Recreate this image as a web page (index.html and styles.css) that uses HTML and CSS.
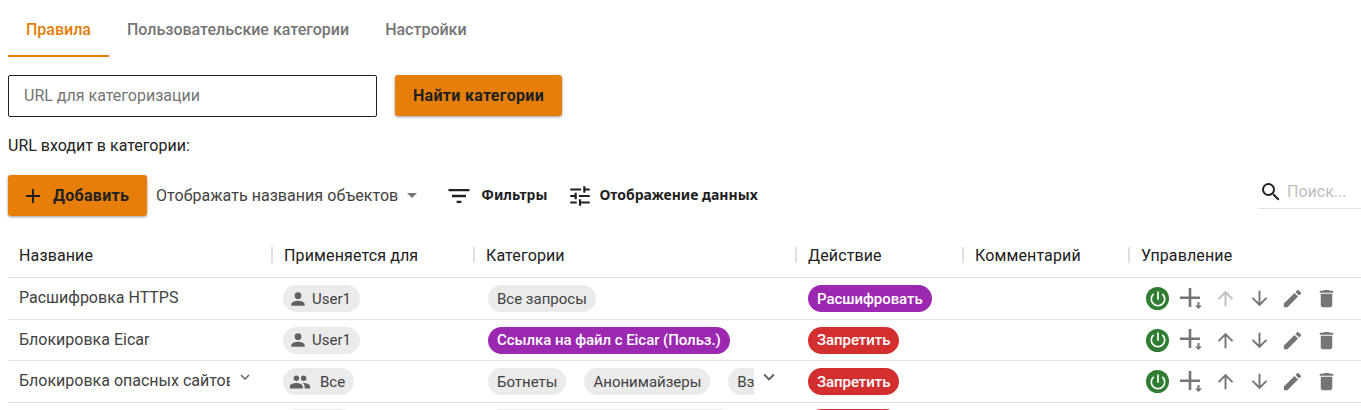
FILE: index.html
```html
<!DOCTYPE html>
<html lang="ru">
<head>
<meta charset="utf-8">
<title>Правила</title>
<link rel="stylesheet" href="styles.css">
</head>
<body>
<svg class="defs" width="0" height="0" aria-hidden="true">
  <symbol id="i-power" viewBox="0 0 24 24"><path d="M13 3h-2v10h2V3zm4.830 2.170l-1.420 1.420C17.990 7.860 19 9.810 19 12c0 3.870-3.130 7-7 7s-7-3.130-7-7c0-2.190 1.010-4.140 2.580-5.420L6.170 5.170C4.230 6.820 3 9.260 3 12c0 4.970 4.030 9 9 9s9-4.030 9-9c0-2.740-1.230-5.180-3.170-6.830z"/></symbol>
  <symbol id="i-add" viewBox="0 0 24 24"><path d="M19 13h-6v6h-2v-6H5v-2h6V5h2v6h6z"/></symbol>
  <symbol id="i-up" viewBox="0 0 24 24"><path d="M4 12l1.410 1.410L11 7.830V20h2V7.830l5.580 5.590L20 12l-8-8z"/></symbol>
  <symbol id="i-down" viewBox="0 0 24 24"><path d="M20 12l-1.410-1.410L13 16.170V4h-2v12.170l-5.580-5.590L4 12l8 8z"/></symbol>
  <symbol id="i-edit" viewBox="0 0 24 24"><path d="M3 17.250V21h3.750L17.810 9.940l-3.750-3.750zM20.710 7.040a1 1 0 0 0 0-1.410l-2.340-2.340a1 1 0 0 0-1.410 0l-1.830 1.830 3.750 3.750z"/></symbol>
  <symbol id="i-trash" viewBox="0 0 24 24"><path d="M6 19c0 1.100.9 2 2 2h8c1.100 0 2-.9 2-2V7H6zM19 4h-3.500l-1-1h-5l-1 1H5v2h14z"/></symbol>
  <symbol id="i-person" viewBox="0 0 24 24"><path d="M12 12a4 4 0 1 0 0-8 4 4 0 0 0 0 8zm0 2c-2.670 0-8 1.340-8 4v2h16v-2c0-2.660-5.330-4-8-4z"/></symbol>
  <symbol id="i-people" viewBox="0 0 24 24"><path d="M16 11a3 3 0 1 0 0-6 3 3 0 0 0 0 6zm-8 0a3 3 0 1 0 0-6 3 3 0 0 0 0 6zm0 2c-2.330 0-7 1.170-7 3.500V19h14v-2.500C15 14.170 10.330 13 8 13zm8 0c-.29 0-.62.020-.97.050 1.160.84 1.970 1.970 1.970 3.450V19h6v-2.500c0-2.330-4.670-3.500-7-3.500z"/></symbol>
  <symbol id="i-chev" viewBox="0 0 24 24"><path d="M7.410 8.590L12 13.170l4.590-4.580L18 10l-6 6-6-6z"/></symbol>
  <symbol id="i-filter" viewBox="0 0 24 24"><path d="M10 18h4v-2h-4zM3 6v2h18V6zm3 7h12v-2H6z"/></symbol>
  <symbol id="i-tune" viewBox="0 0 24 24"><path d="M3 17v2h6v-2zM3 5v2h10V5zm10 16v-2h8v-2h-8v-2h-2v6zM7 9v2H3v2h4v2h2V9zm14 4v-2H11v2zm-6-4h2V7h4V5h-4V3h-2z"/></symbol>
  <symbol id="i-search" viewBox="0 0 24 24"><path d="M15.500 14h-.79l-.28-.27A6.470 6.470 0 0 0 16 9.500 6.500 6.500 0 1 0 9.500 16c1.610 0 3.090-.59 4.230-1.570l.27.28v.79l5 4.990L20.490 19zm-6 0C7.010 14 5 11.990 5 9.500S7.010 5 9.500 5 14 7.010 14 9.500 11.990 14 9.500 14z"/></symbol>
  <symbol id="i-addrow" viewBox="0 0 22 22"><path d="M8.700 0h2.600v8.400H20V11h-8.700v8H8.700v-8H0V8.400h8.700z"/><path d="M17.500 14h2v3.500H22L18.500 21 15 17.500h2.500z"/></symbol>
</svg>

<nav class="tabs">
  <a class="tab tab-active">Правила</a>
  <a class="tab">Пользовательские категории</a>
  <a class="tab">Настройки</a>
</nav>

<section class="lookup">
  <div class="url-field">URL для категоризации</div>
  <button class="btn btn-find">Найти категории</button>
</section>
<p class="url-note">URL входит в категории:</p>

<section class="toolbar">
  <button class="btn btn-add"><svg class="ic24"><use href="#i-add"/></svg><span>Добавить</span></button>
  <div class="select"><span>Отображать названия объектов</span><i class="caret"></i></div>
  <div class="tool tool-filter"><svg class="ic28"><use href="#i-filter"/></svg><span>Фильтры</span></div>
  <div class="tool tool-view"><svg class="ic26"><use href="#i-tune"/></svg><span>Отображение данных</span></div>
  <div class="search"><svg class="ic24"><use href="#i-search"/></svg><span>Поиск...</span></div>
</section>

<section class="table">
  <div class="row head">
    <div class="cell c-name">Название</div>
    <div class="cell c-for">Применяется для</div>
    <div class="cell c-cat">Категории</div>
    <div class="cell c-act">Действие</div>
    <div class="cell c-com">Комментарий</div>
    <div class="cell c-ctl">Управление</div>
  </div>

  <div class="row">
    <div class="cell c-name">Расшифровка HTTPS</div>
    <div class="cell c-for"><span class="chip chip-user"><svg class="ic20"><use href="#i-person"/></svg>User1</span></div>
    <div class="cell c-cat"><span class="chip">Все запросы</span></div>
    <div class="cell c-act"><span class="chip chip-purple">Расшифровать</span></div>
    <div class="cell c-com"></div>
    <div class="cell c-ctl">
      <span class="power"><svg><use href="#i-power"/></svg></span>
      <svg class="addrow"><use href="#i-addrow"/></svg>
      <svg class="ctl off"><use href="#i-up"/></svg>
      <svg class="ctl"><use href="#i-down"/></svg>
      <svg class="ctl"><use href="#i-edit"/></svg>
      <svg class="ctl"><use href="#i-trash"/></svg>
    </div>
  </div>

  <div class="row">
    <div class="cell c-name">Блокировка Eicar</div>
    <div class="cell c-for"><span class="chip chip-user"><svg class="ic20"><use href="#i-person"/></svg>User1</span></div>
    <div class="cell c-cat"><span class="chip chip-purple">Ссылка на файл с Eicar (Польз.)</span></div>
    <div class="cell c-act"><span class="chip chip-red">Запретить</span></div>
    <div class="cell c-com"></div>
    <div class="cell c-ctl">
      <span class="power"><svg><use href="#i-power"/></svg></span>
      <svg class="addrow"><use href="#i-addrow"/></svg>
      <svg class="ctl"><use href="#i-up"/></svg>
      <svg class="ctl"><use href="#i-down"/></svg>
      <svg class="ctl"><use href="#i-edit"/></svg>
      <svg class="ctl"><use href="#i-trash"/></svg>
    </div>
  </div>

  <div class="row">
    <div class="cell c-name"><span class="clip clip-name">Блокировка опасных сайтов</span><svg class="chev chev-name"><use href="#i-chev"/></svg></div>
    <div class="cell c-for"><span class="chip chip-group"><svg class="ic22"><use href="#i-people"/></svg>Все</span></div>
    <div class="cell c-cat"><div class="clip clip-cat"><span class="chip">Ботнеты</span><span class="chip">Анонимайзеры</span><span class="chip">Взлом</span></div><svg class="chev chev-cat"><use href="#i-chev"/></svg></div>
    <div class="cell c-act"><span class="chip chip-red">Запретить</span></div>
    <div class="cell c-com"></div>
    <div class="cell c-ctl">
      <span class="power"><svg><use href="#i-power"/></svg></span>
      <svg class="addrow"><use href="#i-addrow"/></svg>
      <svg class="ctl"><use href="#i-up"/></svg>
      <svg class="ctl"><use href="#i-down"/></svg>
      <svg class="ctl"><use href="#i-edit"/></svg>
      <svg class="ctl"><use href="#i-trash"/></svg>
    </div>
  </div>

  <div class="row row-last">
    <div class="cell c-name"></div>
    <div class="cell c-for"><span class="chip chip-group"><svg class="ic22"><use href="#i-people"/></svg>Все</span></div>
    <div class="cell c-cat"><div class="clip clip-cat"><span class="chip">Азартные игры и ставки онлайн</span><span class="chip">Взлом</span></div></div>
    <div class="cell c-act"><span class="chip chip-red">Запретить</span></div>
  </div>
</section>
</body>
</html>
```

FILE: styles.css
```css
* { box-sizing: border-box; }
html, body { margin: 0; height: 410px; overflow: hidden; background: #fff; }
body { font-family: Roboto, "Liberation Sans", sans-serif; font-size: 16px; color: #212121; padding: 0 0 0 8px; }
.defs { position: absolute; }
svg { fill: currentColor; display: block; flex: none; }
.ic20 { width: 20px; height: 20px; }
.ic22 { width: 22px; height: 22px; }
.ic24 { width: 24px; height: 24px; }
.ic26 { width: 26px; height: 26px; }
.ic28 { width: 28px; height: 28px; }

.tabs { display: flex; height: 57px; }
.tab { height: 57px; line-height: 59px; padding: 0 18px; font-size: 16px; font-weight: 500; color: #757575; }
.tab-active { color: #e67e08; border-bottom: 2px solid #e67e08; }

.lookup { display: flex; gap: 18px; margin-top: 18px; }
.url-field { width: 369px; height: 42px; border: 1px solid #212121; border-radius: 2px; padding: 0 15px; line-height: 39px; font-size: 16px; color: #757575; }
.btn { border: 0; border-radius: 3px; background: #e67e08; color: #212121; font: 700 16px Roboto, "Liberation Sans", sans-serif; letter-spacing: .3px; box-shadow: 0 1px 3px rgba(0,0,0,.4); padding: 0; }
.btn-find { width: 167px; height: 41px; }

.url-note { margin: 20px 0 0; height: 18px; line-height: 18px; font-size: 16px; }

.toolbar { display: flex; align-items: center; height: 41px; margin-top: 20px; position: relative; }
.btn-add { display: flex; align-items: center; width: 139px; height: 41px; padding-left: 13px; gap: 8px; }
.select { display: flex; align-items: center; margin-left: 9px; font-size: 16px; letter-spacing: .05px; color: #424242; }
.caret { width: 0; height: 0; margin-left: 9px; border: 5.500px solid transparent; border-top-color: #757575; border-bottom: 0; }
.tool { display: flex; align-items: center; font-size: 14px; font-weight: 700; font-family: "Noto Sans", Roboto, sans-serif; color: #212121; }
.tool span { margin-top: -2px; }
.tool-filter { margin-left: 28px; gap: 8px; }
.tool-view { margin-left: 20px; gap: 6px; }
.search { position: absolute; top: 0; right: 0; width: 103px; height: 34px; border-bottom: 1px solid #e0e0e0; display: flex; align-items: center; gap: 4px; padding-left: 1px; font-size: 16px; color: #bdbdbd; }
.search svg { color: #212121; }

.table { margin-top: 18px; width: 1353px; }
.row { display: flex; height: 42px; border-bottom: 1px solid #e0e0e0; align-items: center; }
.row:nth-child(3) { height: 41px; }
.row-last { height: 40px; }
.head { height: 44px; }
.cell { display: flex; align-items: center; padding-left: 11px; height: 100%; font-size: 16px; color: #424242; position: relative; flex: none; }
.head .cell { color: #212121; font-weight: 400; letter-spacing: .13px; padding-left: 13px; }
.head .c-name { padding-left: 11px; }
.head .cell + .cell::before { content: ""; position: absolute; left: 0; top: 13px; height: 16px; width: 2px; background: #e0e0e0; }
.c-name { width: 263px; }
.c-for { width: 202px; }
.c-cat { width: 322px; }
.c-act { width: 167px; }
.c-com { width: 166px; }
.c-ctl { width: 233px; }
.row:not(.head) .c-name { padding-bottom: 2px; }
.row:not(.head) .c-for { padding-left: 12px; }
.row:not(.head) .c-cat { padding-left: 15px; }
.row:not(.head) .c-act { padding-left: 13px; }

.chip { display: inline-flex; align-items: center; height: 27px; padding: 0 9px; border-radius: 14px; background: #ebebeb; color: #424242; font-size: 15px; white-space: nowrap; flex: none; }
.chip svg { color: #616161; }
.chip-user { padding-left: 5px; gap: 4px; }
.chip-group { padding-left: 6px; gap: 9px; }
.chip-purple { background: #9c27b0; color: #fff; font-weight: 500; letter-spacing: -.06px; }
.chip-red { background: #d32f2f; color: #fff; font-weight: 500; letter-spacing: -.06px; }

.clip { overflow: hidden; white-space: nowrap; display: block; }
.clip-name { width: 211px; }
.clip-cat { display: flex; gap: 18px; width: 266px; }
.chev { color: #616161; margin-top: -9px; }
.chev-name { width: 18px; height: 18px; margin-left: 6px; margin-top: -7px; }
.chev-cat { width: 22px; height: 22px; margin-left: 4px; }

.row:not(.head) .c-ctl { padding-left: 18px; }
.power { display: flex; align-items: center; justify-content: center; width: 23px; height: 23px; border-radius: 50%; background: #2e7d32; color: #fff; flex: none; }
.power svg { width: 20px; height: 20px; }
.addrow { width: 22px; height: 22px; color: #757575; margin-left: 11px; margin-right: 1px; }
.ctl { width: 23px; height: 23px; color: #757575; margin-left: 10.500px; }
.addrow + .ctl { margin-left: 11px; }
.ctl.off { color: #bdbdbd; }
```
